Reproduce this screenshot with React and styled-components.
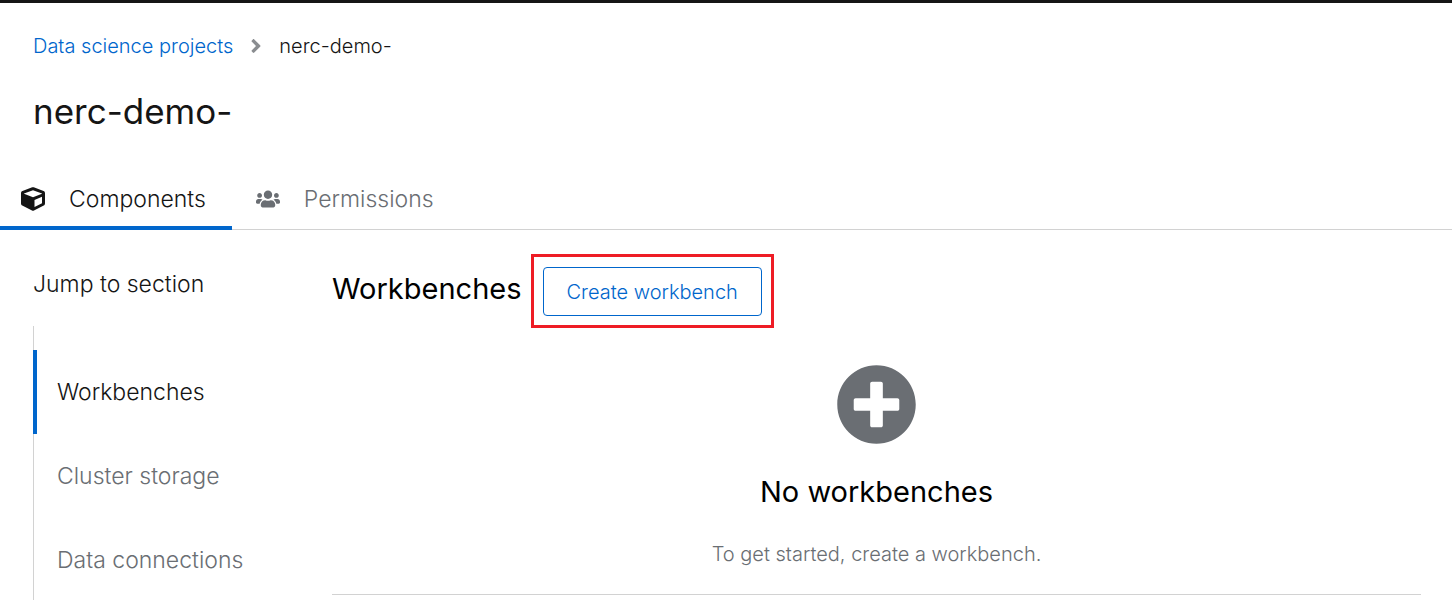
import React from 'react';
import styled, { createGlobalStyle } from 'styled-components';
import { FaCube, FaUsers, FaPlusCircle, FaAngleRight } from 'react-icons/fa';

const GlobalStyle = createGlobalStyle`
  *, *::before, *::after { box-sizing: border-box; }
  html, body { margin: 0; background: #fff; }
  body {
    font-family: Inter, "Open Sans", "Liberation Sans", sans-serif;
    font-weight: 300;
    color: #151515;
  }
  h1, h2, h3, p, ol, ul { margin: 0; padding: 0; font-weight: inherit; }
  ol, ul { list-style: none; }
  a { text-decoration: none; color: inherit; }
  button { font: inherit; cursor: pointer; }
`;

const Page = styled.div`
  height: 100vh;
  overflow: hidden;
  border-top: 3px solid #151515;
`;

const Header = styled.header`
  padding: 27px 33px 0;
`;

const Crumbs = styled.ol`
  display: flex;
  align-items: center;
  gap: 12px;
  font-size: 20px;
  line-height: 32px;
  a { color: #06c; }
  svg { display: block; font-size: 22px; color: #8a8d90; }
`;

const Title = styled.h1`
  padding-top: 25px;
  font-weight: 400;
  font-size: 35px;
  line-height: 48px;
`;

const Tabs = styled.div`
  display: flex;
  margin-top: 35px;
  box-shadow: inset 0 -1px #d2d2d2;
`;

const Tab = styled.button`
  display: flex;
  align-items: center;
  gap: 24px;
  height: 60px;
  padding: 2px 24px 0;
  border: 0;
  border-bottom: 4px solid ${(p) => (p.$active ? '#06c' : 'transparent')};
  background: none;
  color: ${(p) => (p.$active ? '#151515' : '#6a6e73')};
  font-size: 23px;
  svg { width: 24px; height: 24px; }
  &:first-child { padding-left: 21px; padding-right: 26px; }
`;

const Body = styled.div`
  display: grid;
  grid-template-columns: 299px 1fr;
  padding: 24px 31px 0 33px;
`;

const JumpTitle = styled.h2`
  font-size: 23px;
  line-height: 60px;
`;

const JumpList = styled.ul`
  margin-top: 12px;
  padding: 24px 0;
  border-left: 1px solid #d2d2d2;
`;

const JumpLink = styled.a`
  display: block;
  margin-left: -1px;
  padding-left: 20px;
  border-left: 4px solid ${(p) => (p.$active ? '#06c' : 'transparent')};
  color: ${(p) => (p.$active ? '#151515' : '#6a6e73')};
  font-size: 23px;
  line-height: 84px;
`;

const Section = styled.section`
  height: 341px;
  border-bottom: 1px solid #d2d2d2;
`;

const SectionHead = styled.div`
  display: flex;
  gap: 9px;
`;

const Heading = styled.h2`
  padding-top: 15px;
  font-weight: 400;
  font-size: 29px;
  line-height: 40px;
  color: #000;
`;

const Highlight = styled.div`
  padding: 10px 9px 9px;
  border: 3px solid #ee1c25;
`;

const CreateButton = styled.button`
  display: block;
  height: 49px;
  padding: 0 23px;
  border: 1px solid #06c;
  border-radius: 4px;
  background: #fff;
  color: #06c;
  font-size: 20px;
`;

const Empty = styled.div`
  display: flex;
  flex-direction: column;
  align-items: center;
  padding-top: 36px;
  > svg { width: 81px; height: 81px; color: #6a6e73; }
  h3 { margin-top: 27px; font-weight: 400; font-size: 29px; line-height: 40px; color: #000; }
  p { margin-top: 26px; font-size: 20px; line-height: 32px; color: #6a6e73; }
`;

export default function App() {
  return (
    <>
      <GlobalStyle />
      <Page>
        <Header>
          <nav aria-label="Breadcrumb">
            <Crumbs>
              <li><a href="#projects">Data science projects</a></li>
              <li aria-hidden="true"><FaAngleRight /></li>
              <li>nerc-demo-</li>
            </Crumbs>
          </nav>
          <Title>nerc-demo-</Title>
        </Header>
        <Tabs role="tablist">
          <Tab role="tab" aria-selected="true" $active><FaCube />Components</Tab>
          <Tab role="tab" aria-selected="false"><FaUsers />Permissions</Tab>
        </Tabs>
        <Body>
          <nav aria-label="Jump to section">
            <JumpTitle>Jump to section</JumpTitle>
            <JumpList>
              <li><JumpLink href="#workbenches" $active>Workbenches</JumpLink></li>
              <li><JumpLink href="#storage">Cluster storage</JumpLink></li>
              <li><JumpLink href="#connections">Data connections</JumpLink></li>
            </JumpList>
          </nav>
          <Section id="workbenches">
            <SectionHead>
              <Heading>Workbenches</Heading>
              <Highlight><CreateButton>Create workbench</CreateButton></Highlight>
            </SectionHead>
            <Empty>
              <FaPlusCircle />
              <h3>No workbenches</h3>
              <p>To get started, create a workbench.</p>
            </Empty>
          </Section>
        </Body>
      </Page>
    </>
  );
}
